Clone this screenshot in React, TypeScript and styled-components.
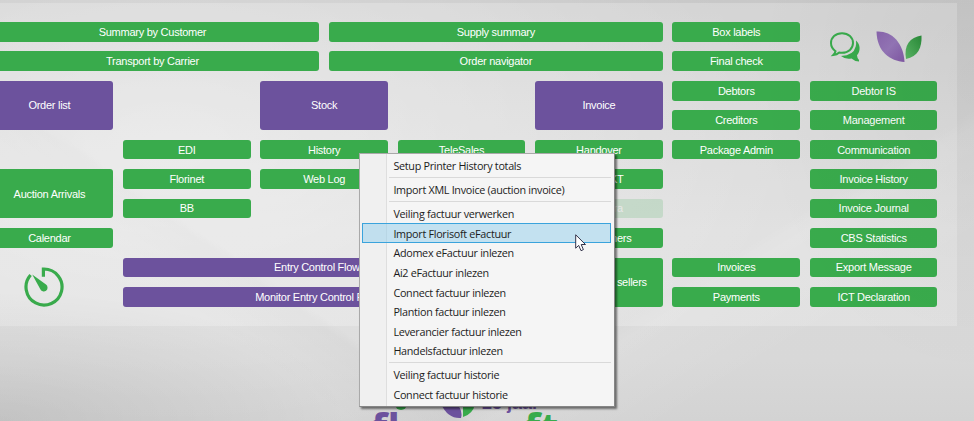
import React from 'react';
import styled, { createGlobalStyle } from 'styled-components';

const green = '#39ab4c';
const purple = '#6c529d';

const GlobalStyle = createGlobalStyle`
  html, body { margin: 0; padding: 0; overflow: hidden; }
  body { font-family: "Liberation Sans", Arial, sans-serif; }
`;

const Screen = styled.main`
  position: relative;
  width: 974px;
  height: 421px;
  overflow: hidden;
  background:
    radial-gradient(ellipse 620px 330px at 170px 150px, rgba(255, 255, 255, 0.42), rgba(255, 255, 255, 0) 100%),
    linear-gradient(149deg, transparent 69%, rgba(255, 255, 255, 0.1) 71%, transparent 82%),
    linear-gradient(215deg, transparent 70%, rgba(0, 0, 0, 0.025) 71%, transparent 78%),
    linear-gradient(to bottom, #c8c8c8 0, #d0d0d0 90px, #d9d9d9 230px, #d8d8d8 360px, #d3d3d3 421px);

  &::after {
    content: '';
    position: absolute;
    inset: 0;
    background:
      radial-gradient(ellipse 350px 130px at 0 421px, rgba(0, 0, 0, 0.09), transparent),
      radial-gradient(ellipse 220px 300px at 974px 80px, rgba(0, 0, 0, 0.04), transparent);
    pointer-events: none;
  }
`;

const Panel = styled.section`
  box-sizing: border-box;
  width: 972px;
  height: 323px;
  margin: 0 0 0 -15px;
  padding: 19px 19px 0 0.6px;
  background: rgba(255, 255, 255, 0.22);
`;

const Top = styled.div`
  padding-top: 3px;
`;

const Board = styled.div`
  display: grid;
  grid-template-columns: repeat(14, 58.95px);
  grid-template-rows: repeat(10, 19.7px);
  gap: 9.75px;
`;

const Tile = styled.button<{ $col: number; $span: number; $row: number; $rows: number; $tone: string; $faded?: boolean }>`
  grid-column: ${p => p.$col} / span ${p => p.$span};
  grid-row: ${p => p.$row} / span ${p => p.$rows};
  display: flex;
  align-items: center;
  justify-content: center;
  border: 0;
  padding: 0;
  border-radius: 3px;
  background: ${p => p.$tone};
  color: #fff;
  font: 11px "Liberation Sans", Arial, sans-serif;
  letter-spacing: -0.26px;
  white-space: nowrap;
  opacity: ${p => (p.$faded ? 0.17 : 1)};
`;

const IconCell = styled.div<{ $col: number; $row: number; $pad: string }>`
  grid-column: ${p => p.$col} / span 2;
  grid-row: ${p => p.$row} / span 2;
  display: flex;
  align-items: center;
  gap: 15px;
  padding: ${p => p.$pad};
  svg { display: block; flex: none; }
`;

const Menu = styled.div`
  position: absolute;
  z-index: 2;
  left: 359px;
  top: 153px;
  box-sizing: border-box;
  width: 256px;
  height: 254px;
  padding: 1.6px 3px 0 2px;
  border: 1px solid #a9a9a9;
  border-right-color: #858585;
  border-bottom-color: #858585;
  background: linear-gradient(to right, #f0f0f0 26px, #dedede 26px, #dedede 27px, #f5f5f5 27px);
  box-shadow: 2px 2px 2px rgba(0, 0, 0, 0.5);
`;

const MenuItem = styled.div<{ $active?: boolean }>`
  box-sizing: border-box;
  height: 19.65px;
  padding-left: 30.4px;
  display: flex;
  align-items: center;
  border: 1px solid ${p => (p.$active ? '#3aa3dc' : 'transparent')};
  background: ${p => (p.$active ? 'rgba(145, 205, 235, 0.5)' : 'transparent')};
  color: #1c1c1c;
  font: 10.8px "Open Sans", "Noto Sans", sans-serif;
  letter-spacing: -0.3px;
  white-space: nowrap;
`;

const Divider = styled.div`
  height: 1px;
  margin: 1.7px 0 1.7px 27px;
  background: #d9d9d9;
`;

const Pointer = styled.svg`
  position: absolute;
  z-index: 3;
  left: 575px;
  top: 234px;
`;

const Brand = styled.svg`
  position: absolute;
  left: 360px;
  top: 396px;
`;

type TileData = [label: string, col: number, row: number, span?: number, rows?: number, tone?: string, faded?: boolean];

const tiles: TileData[] = [
  ['Summary by Customer', 1, 1, 5],
  ['Supply summary', 6, 1, 5],
  ['Box labels', 11, 1],
  ['Transport by Carrier', 1, 2, 5],
  ['Order navigator', 6, 2, 5],
  ['Final check', 11, 2],
  ['Order list', 1, 3, 2, 2, purple],
  ['Stock', 5, 3, 2, 2, purple],
  ['Invoice', 9, 3, 2, 2, purple],
  ['Debtors', 11, 3],
  ['Debtor IS', 13, 3],
  ['Creditors', 11, 4],
  ['Management', 13, 4],
  ['EDI', 3, 5],
  ['History', 5, 5],
  ['TeleSales', 7, 5],
  ['Handover', 9, 5],
  ['Package Admin', 11, 5],
  ['Communication', 13, 5],
  ['Auction Arrivals', 1, 6, 2, 2],
  ['Florinet', 3, 6],
  ['Web Log', 5, 6],
  ['Floral EKT', 9, 6],
  ['Invoice History', 13, 6],
  ['BB', 3, 7],
  ['Floral Xtra', 9, 7, 2, 1, green, true],
  ['Invoice Journal', 13, 7],
  ['Calendar', 1, 8],
  ['All Customers', 9, 8],
  ['CBS Statistics', 13, 8],
  ['Entry Control Flowers', 3, 9, 6, 1, purple],
  ['Commissions sellers', 9, 9, 2, 2],
  ['Invoices', 11, 9],
  ['Export Message', 13, 9],
  ['Monitor Entry Control Flowers', 3, 10, 6, 1, purple],
  ['Payments', 11, 10],
  ['ICT Declaration', 13, 10],
];

const menuGroups: string[][] = [
  ['Setup Printer History totals'],
  ['Import XML Invoice (auction invoice)'],
  [
    'Veiling factuur verwerken',
    'Import Florisoft eFactuur',
    'Adomex eFactuur inlezen',
    'Ai2 eFactuur inlezen',
    'Connect factuur inlezen',
    'Plantion factuur inlezen',
    'Leverancier factuur inlezen',
    'Handelsfactuur inlezen',
  ],
  ['Veiling factuur historie', 'Connect factuur historie'],
];

const TimerIcon = () => (
  <svg width="40" height="40" viewBox="0 0 40 40">
    <path d="M19.4 9.8V2H20A18 18 0 1 1 6.6 8" fill="none" stroke={green} strokeWidth="3.2" />
    <path d="M8.2 7.6 22 17.6A3.8 3.8 0 1 1 16.2 22Z" fill={green} />
  </svg>
);

const ChatIcon = () => (
  <svg width="32" height="32" viewBox="0 0 32 32">
    <path d="M27 9.5C31.8 13.5 31.5 20.5 28 24.2Q28 26.5 30 29V30.5Q25 30 22.5 27.5Q16.5 28.8 12 25Q24.5 24.6 26.7 15.5Q27.4 12.5 27 9.5Z" fill={green} />
    <path d="M13 2.2C6.5 2.2 2 6.5 2 12C2 15.5 3.8 18.3 6.5 20.2Q6 22.3 4.3 24Q8 23.7 10.2 21.5Q11.5 21.8 13 21.8C19.5 21.8 24 17.5 24 12S19.5 2.2 13 2.2Z" fill="none" stroke={green} strokeWidth="2" />
  </svg>
);

const LeafIcon = () => (
  <svg width="46" height="32" viewBox="0 0 46 32">
    <defs>
      <linearGradient id="leafViolet" x1="0" y1="0" x2="1" y2="1">
        <stop offset="0" stopColor="#8964ad" />
        <stop offset="0.5" stopColor="#9476b7" />
        <stop offset="1" stopColor="#8058a4" />
      </linearGradient>
      <linearGradient id="leafGreen" x1="1" y1="0" x2="0" y2="1">
        <stop offset="0" stopColor="#288b38" />
        <stop offset="1" stopColor="#5cb766" />
      </linearGradient>
    </defs>
    <path d="M0.5 0.5C15-.5 27.5 11 28.5 31C14 30 1 21 0.5 0.5Z" fill="url(#leafViolet)" />
    <path d="M45.5 4.5C34 6.5 27.5 14 30 28C42 25.5 46 17 45.5 4.5Z" fill="url(#leafGreen)" />
  </svg>
);

export default function App() {
  return (
    <Screen>
      <GlobalStyle />
      <Top>
        <Panel>
          <Board>
            {tiles.map(([label, col, row, span = 2, rows = 1, tone = green, faded]) => (
              <Tile key={label} $col={col} $row={row} $span={span} $rows={rows} $tone={tone} $faded={faded}>
                {label}
              </Tile>
            ))}
            <IconCell $col={13} $row={1} $pad="0 0 0 18.8px">
              <ChatIcon />
              <LeafIcon />
            </IconCell>
            <IconCell $col={1} $row={9} $pad="9px 0 0 38.8px"><TimerIcon /></IconCell>
          </Board>
        </Panel>
      </Top>
      <Brand width="200" height="25" viewBox="0 0 200 25">
        <circle cx="41" cy="8" r="6" fill={green} />
        <path d="M81 8Q88 23 101 22Q103 15 97 8Z" fill={purple} />
        <path d="M103 21V8H115Q113 18 103 21Z" fill={green} />
        <text x="122" y="13" fontFamily="Liberation Sans" fontWeight="700" fontSize="18" fill={purple}>25 jaar</text>
        <text x="11" y="47" fontFamily="Open Sans" fontWeight="700" fontSize="42" fill={purple}>fl</text>
        <text x="164" y="47" fontFamily="Open Sans" fontWeight="700" fontSize="42" fill={green}>ft</text>
      </Brand>
      <Menu>
        {menuGroups.map((group, i) => (
          <React.Fragment key={i}>
            {i > 0 && <Divider />}
            {group.map(item => (
              <MenuItem key={item} $active={item === 'Import Florisoft eFactuur'}>{item}</MenuItem>
            ))}
          </React.Fragment>
        ))}
      </Menu>
      <Pointer width="12" height="18" viewBox="0 0 12 18">
        <path d="M0.7 0.8V14.2L3.7 11.4L6 16.7L8.4 15.6L6.2 10.5H10.5Z" fill="#fff" stroke="#33334a" strokeWidth="1" />
      </Pointer>
    </Screen>
  );
}
